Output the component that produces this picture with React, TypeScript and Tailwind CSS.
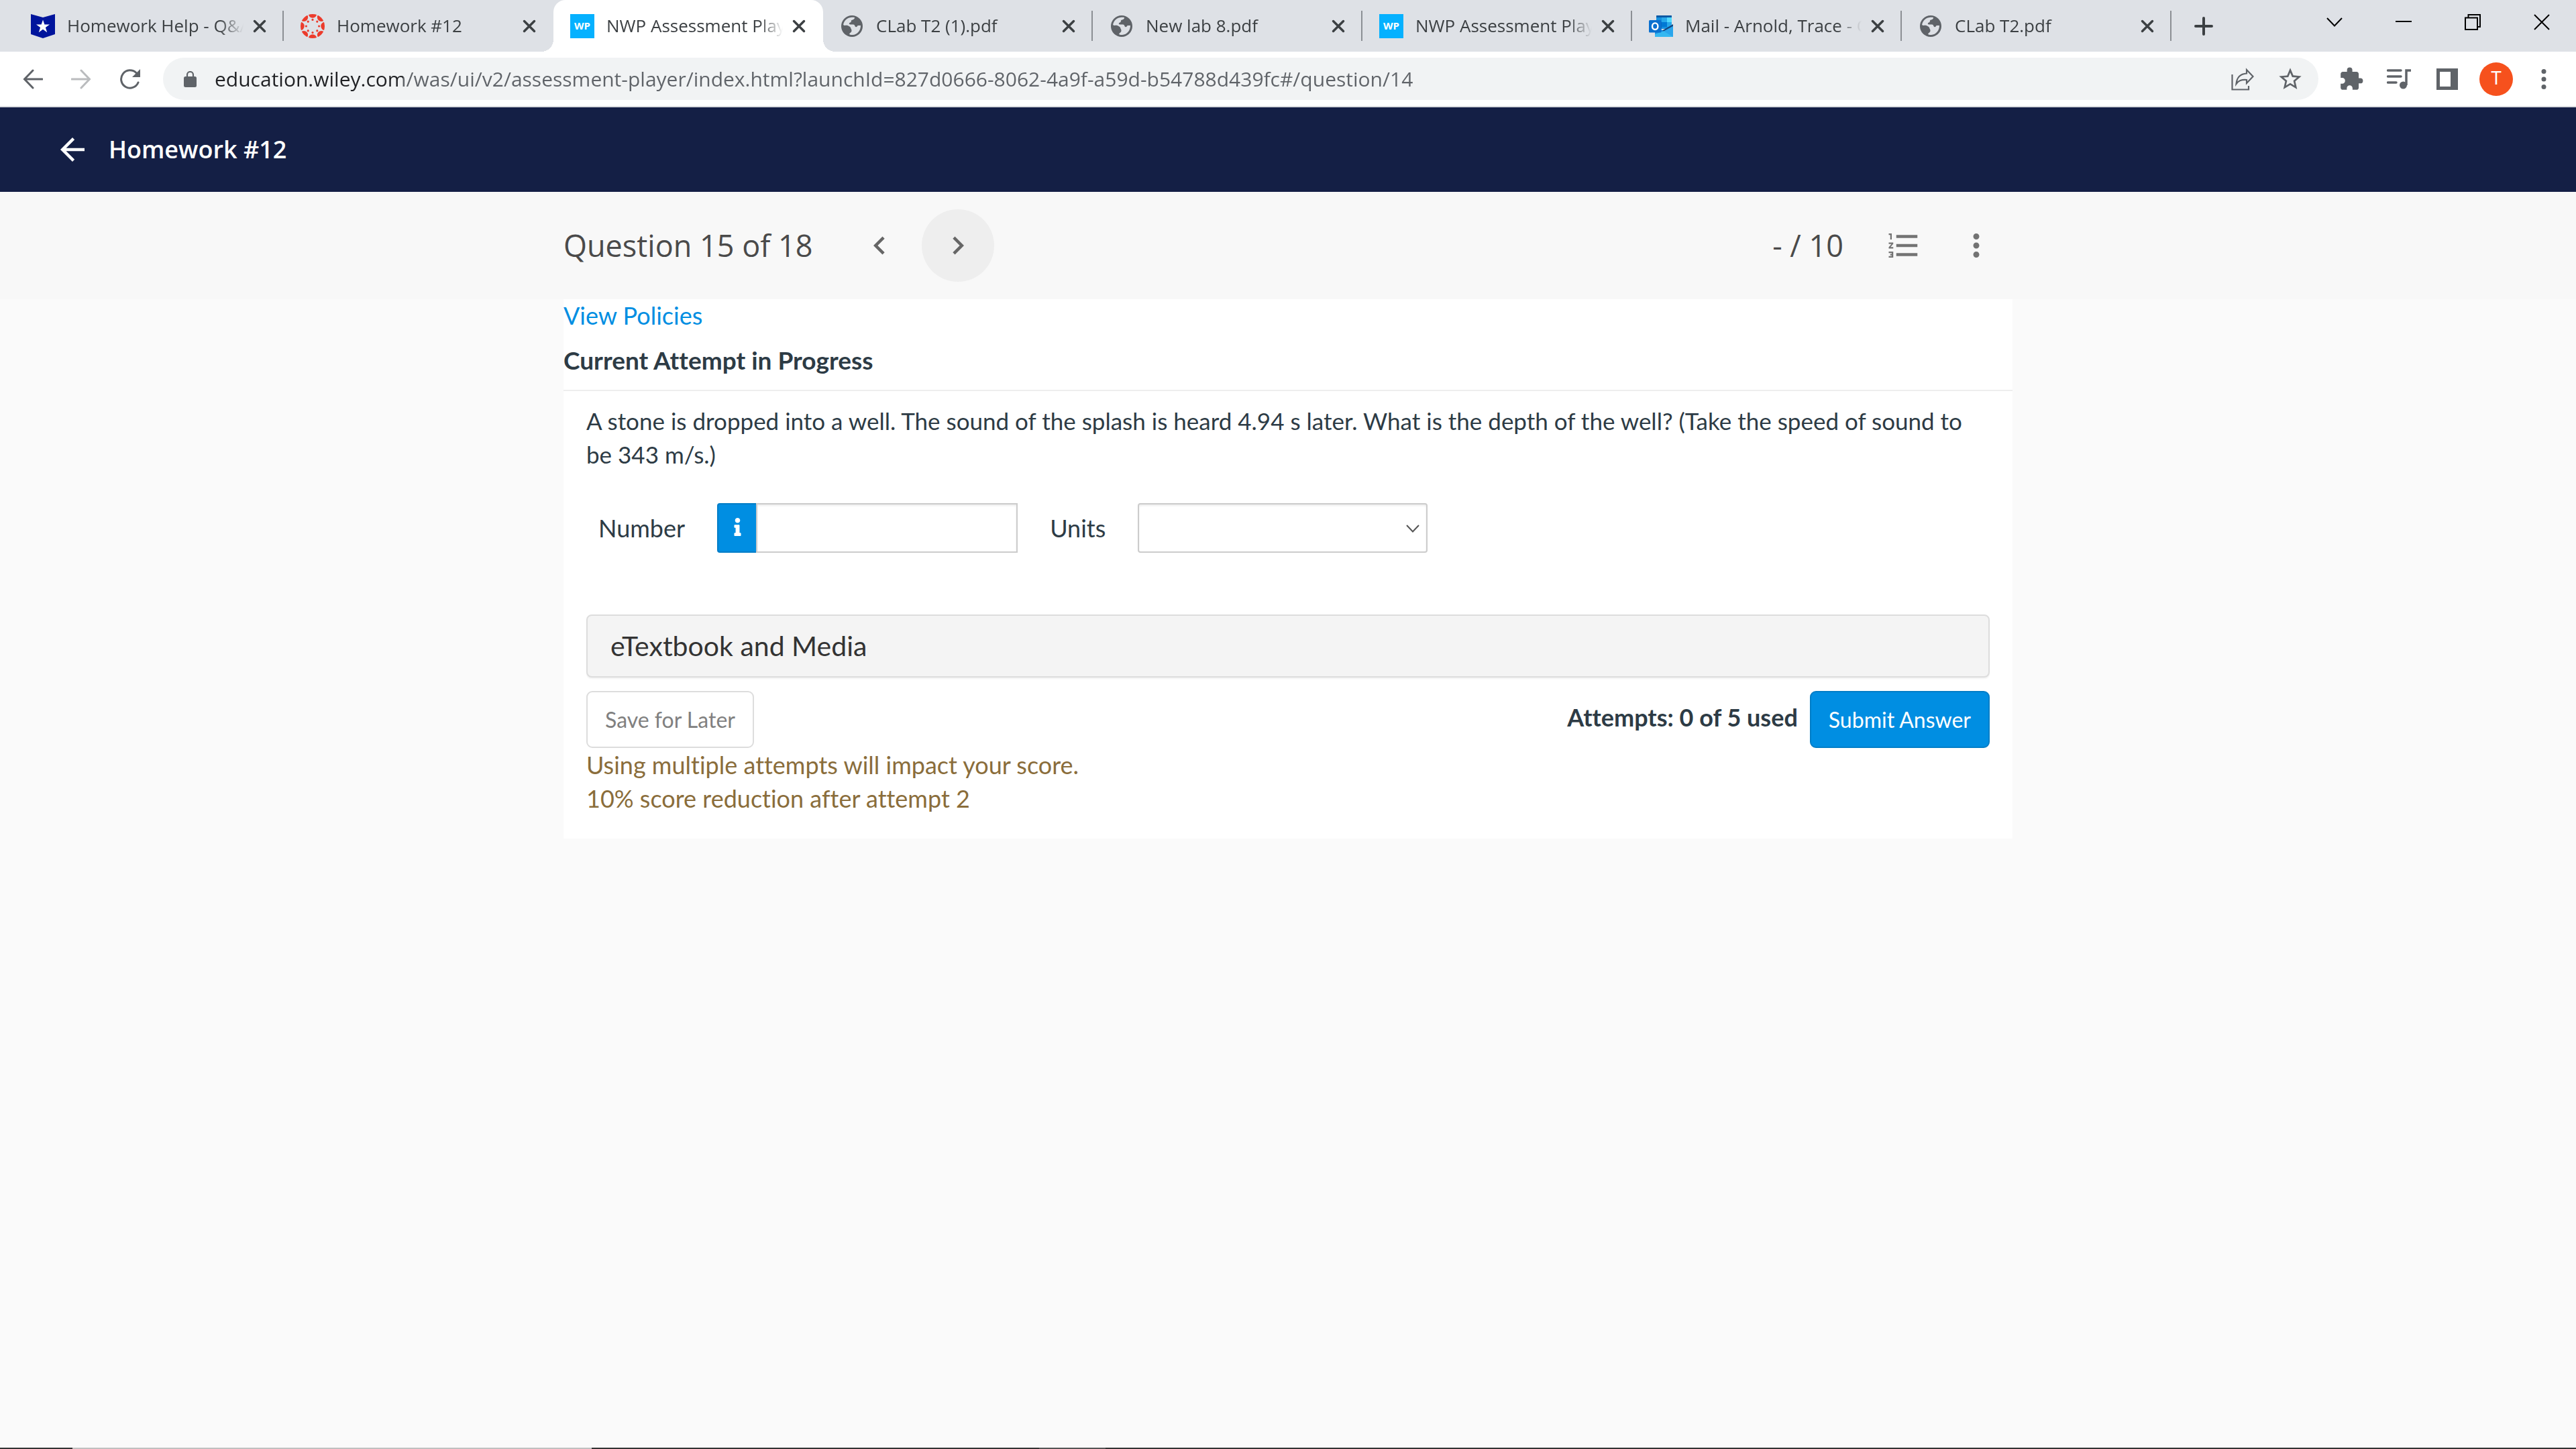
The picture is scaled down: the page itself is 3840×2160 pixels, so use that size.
import React from 'react';
import {
  MdArrowBack,
  MdChevronLeft,
  MdChevronRight,
  MdExtension,
  MdFormatListNumbered,
  MdMoreVert,
  MdStarBorder,
} from 'react-icons/md';
import { FaInfo } from 'react-icons/fa';

type Favicon = 'shield' | 'canvas' | 'wp' | 'globe' | 'outlook';

interface BrowserTab {
  title: string;
  icon: Favicon;
  active?: boolean;
  beforeActive?: boolean;
}

const TABS: BrowserTab[] = [
  { title: 'Homework Help - Q&A', icon: 'shield' },
  { title: 'Homework #12', icon: 'canvas', beforeActive: true },
  { title: 'NWP Assessment Player', icon: 'wp', active: true },
  { title: 'CLab T2 (1).pdf', icon: 'globe' },
  { title: 'New lab 8.pdf', icon: 'globe' },
  { title: 'NWP Assessment Player', icon: 'wp' },
  { title: 'Mail - Arnold, Trace - Outlook', icon: 'outlook' },
  { title: 'CLab T2.pdf', icon: 'globe' },
];

const URL =
  'education.wiley.com/was/ui/v2/assessment-player/index.html?launchId=827d0666-8062-4a9f-a59d-b54788d439fc#/question/14';

function TabIcon({ icon }: { icon: Favicon }) {
  switch (icon) {
    case 'shield':
      return (
        <svg className="size-9 shrink-0" viewBox="0 0 36 36">
          <path d="M0 0L18 5L36 0V30L18 36L0 30Z" fill="#00149c" />
          <path
            d="M18 8.5L20.4 15.6H28L21.9 20L24.2 27.2L18 22.8L11.8 27.2L14.1 20L8 15.6H15.6Z"
            fill="#fff"
          />
        </svg>
      );
    case 'canvas':
      return (
        <svg className="size-9 shrink-0" viewBox="0 0 36 36" fill="#ec3b2c">
          <clipPath id="canvas-disc">
            <circle cx="18" cy="18" r="18" />
          </clipPath>
          {[0, 45, 90, 135, 180, 225, 270, 315].map((angle) => (
            <g key={angle} transform={`rotate(${angle} 18 18)`}>
              <circle cx="18" cy="-0.5" r="6.2" clipPath="url(#canvas-disc)" />
              <circle cx="18" cy="8.4" r="1.6" />
            </g>
          ))}
        </svg>
      );
    case 'wp':
      return (
        <span className="size-9 shrink-0 bg-[#05b1ff] flex items-center justify-center font-['Open_Sans',sans-serif] font-bold text-[15px] leading-none text-white">
          WP
        </span>
      );
    case 'outlook':
      return (
        <svg className="size-9 shrink-0" viewBox="0 0 36 36">
          <path d="M11 3Q11 2 12 2H33Q34 2 34 3V22H11Z" fill="#1490df" />
          <path d="M11 3Q11 2 12 2H33Q34 2 34 3V5H11Z" fill="#0c59a4" />
          <path d="M27 5H34V12H27Z" fill="#50d9ff" />
          <path d="M19 5H27V12H19Z" fill="#28a8ea" />
          <path d="M19 12H27V19H19Z" fill="#0078d4" />
          <path d="M27 12H34V19H27Z" fill="#28a8ea" />
          <path d="M11 12H19V22H11Z" fill="#0364b8" />
          <path d="M36 17L22 25L9 18V30H36Z" fill="#1a8fe0" />
          <path d="M36 15V18L22 26L20 24.500Z" fill="#14447d" />
          <path d="M36 18V34H9V30L22 25.500Z" fill="#2aa5ec" />
          <path d="M9 34H36L22 25.500L9 30Z" fill="#35b8f1" />
          <rect x="0" y="9" width="18.500" height="18.500" rx="1.500" fill="#0a70cf" />
          <ellipse cx="9.200" cy="18.200" rx="4.200" ry="4.800" fill="none" stroke="#fff" strokeWidth="2.400" />
        </svg>
      );
    default:
      return (
        <svg className="size-9 shrink-0" viewBox="0 0 36 36">
          <circle cx="18" cy="18" r="16" fill="#5f6368" />
          <path
            d="M15 5.300C20 4.300 22 5 22 5.300C22 8 19 8.500 17.500 9C16.500 9.500 17.500 12 15.500 12.500C13 13 13.500 15.500 15.500 15.500H20C22.500 15.500 22 19 24 19.300C26 19.500 25.500 17 27.500 17H31C31.200 24 26 30.600 19 31C16.500 31.200 14.500 30.500 14 30C14 28 17.500 27.500 17.500 25C17.500 22.500 16.500 21 14 21H9C7.500 21 6.500 19 5 17.500C5 11.500 9.500 6.500 15 5.300Z"
            fill="#dee1e6"
          />
          <path d="M5 16C7 18 9 16 11.500 17C16 19 18 21 15 25L14 30.500C8 29 4.500 24 5 16Z" fill="#5f6368" />
        </svg>
      );
  }
}

function Tab({ tab }: { tab: BrowserTab }) {
  return (
    <div
      className={`relative flex h-full min-w-0 max-w-[402px] flex-1 items-center pl-[25px] ${
        tab.active ? 'z-10 rounded-t-[18px] bg-white' : ''
      }`}
    >
      {tab.active && (
        <>
          <span className="absolute -left-[18px] bottom-0 size-[18px] bg-[radial-gradient(circle_at_0_0,transparent_18px,white_18px)]" />
          <span className="absolute -right-[18px] bottom-0 size-[18px] bg-[radial-gradient(circle_at_100%_0,transparent_18px,white_18px)]" />
        </>
      )}
      <TabIcon icon={tab.icon} />
      <span className="ml-[18px] min-w-0 flex-1 overflow-hidden whitespace-nowrap pb-[2px] text-[26px] leading-9 text-[#3c4043] [mask-image:linear-gradient(to_left,transparent,black_36px)]">
        {tab.title}
      </span>
      <button aria-label={`Close ${tab.title}`} className="ml-[14px] mr-6 shrink-0">
        <svg className="size-5" viewBox="0 0 20 20" stroke="#3c4043" strokeWidth="3.500" strokeLinecap="round">
          <path d="M2.500 2.500L17.500 17.500M17.500 2.500L2.500 17.500" />
        </svg>
      </button>
      <span
        className={`h-[45px] w-[2px] shrink-0 ${
          tab.active || tab.beforeActive ? 'bg-transparent' : 'bg-[#8b8f94]'
        }`}
      />
    </div>
  );
}

function WindowButton({ label, d }: { label: string; d: string }) {
  return (
    <button aria-label={label} className="flex h-[66px] w-[103px] items-center justify-center">
      <svg className="size-6" viewBox="0 0 24 24" fill="none" stroke="#000" strokeWidth="2">
        <path d={d} />
      </svg>
    </button>
  );
}

function TabStrip() {
  return (
    <div className="flex h-[77px] items-start bg-[#dee1e6] pl-[21px]">
      <div className="flex h-full min-w-0 flex-1">
        {TABS.map((tab, i) => (
          <Tab key={i} tab={tab} />
        ))}
        <button aria-label="New tab" className="ml-[34px] self-center">
          <svg className="size-7" viewBox="0 0 28 28" stroke="#3c4043" strokeWidth="4" strokeLinecap="round">
            <path d="M14 2V26M2 14H26" />
          </svg>
        </button>
      </div>
      <WindowButton label="Search tabs" d="M1 6L12 17.500L23 6" />
      <WindowButton label="Minimize" d="M0 11H24" />
      <WindowButton label="Restore" d="M1 5.500H19V23H1ZM5.500 5.500V1H23V19H19" />
      <WindowButton label="Close" d="M1 1L23 23M23 1L1 23" />
    </div>
  );
}

function Toolbar() {
  return (
    <div className="flex h-[83px] items-center border-b-2 border-[#dadce0] bg-white pl-[34px] pr-6">
      <button aria-label="Back" className="shrink-0">
        <svg className="size-[30px]" viewBox="0 0 30 30" fill="none" stroke="#5f6368" strokeWidth="3" strokeLinecap="round">
          <path d="M29 15H3M15 2L2.500 15L15 28" />
        </svg>
      </button>
      <button aria-label="Forward" className="ml-[42px] shrink-0" disabled>
        <svg className="size-[30px]" viewBox="0 0 30 30" fill="none" stroke="#babcbe" strokeWidth="3" strokeLinecap="round">
          <path d="M1 15H27M15 2L27.500 15L15 28" />
        </svg>
      </button>
      <button aria-label="Reload" className="ml-[42px] shrink-0">
        <svg className="size-8" viewBox="0 0 32 32" fill="none" stroke="#5f6368" strokeWidth="3" strokeLinecap="round">
          <path d="M28 21A13.200 13.200 0 1 1 25 6.500" />
          <path d="M31 1V13H19Z" fill="#5f6368" stroke="none" />
        </svg>
      </button>
      <div className="ml-[33px] flex h-[63px] min-w-0 flex-1 items-center rounded-full bg-[#f1f3f4] pl-[31px] pr-[22px]">
        <svg className="h-6 w-[19px] shrink-0" viewBox="0 0 19 24">
          <rect y="8" width="19" height="16" rx="2.500" fill="#5f6368" />
          <path d="M5 9V5.500A4.500 4.500 0 0 1 14 5.500V9" fill="none" stroke="#5f6368" strokeWidth="2.200" />
        </svg>
        {/* host is dark, the path after it is grey */}
        <input
          aria-label="Address"
          type="text"
          defaultValue={URL}
          className="ml-[27px] h-[50px] min-w-0 flex-1 bg-[linear-gradient(to_right,#202124_281px,#5f6368_281px)] bg-clip-text text-[30px] text-transparent outline-none"
        />
        <button aria-label="Share" className="shrink-0">
          <svg className="size-[34px]" viewBox="0 0 34 34" fill="none" stroke="#5f6368" strokeWidth="2.200">
            <path d="M1.500 10V32.500H26V27" />
            <path d="M23 3L32.500 13L23 23V18C15 17.500 11 19 7.500 24C8.500 14 14 9 23 8.500Z" />
          </svg>
        </button>
        <button aria-label="Bookmark this page" className="ml-[34px] shrink-0 text-[#5f6368]">
          <MdStarBorder className="size-10" />
        </button>
      </div>
      <button aria-label="Extensions" className="ml-[30px] shrink-0 text-[#5f6368]">
        <MdExtension className="size-[38px]" />
      </button>
      <button aria-label="Media controls" className="ml-[34px] shrink-0">
        <svg className="h-[30px] w-9" viewBox="0 0 36 30" fill="none" stroke="#5f6368" strokeWidth="3.500">
          <path d="M1.500 2H21M1.500 11H21M1.500 20H14" strokeLinecap="round" />
          <path d="M36 2H29V24" />
          <circle cx="24.500" cy="24" r="5.500" fill="#5f6368" stroke="none" />
        </svg>
      </button>
      <button aria-label="Side panel" className="ml-[38px] shrink-0">
        <svg className="size-8" viewBox="0 0 32 32">
          <path d="M0 0H32V32H0ZM5 5V27H21V5Z" fill="#5f6368" fillRule="evenodd" />
        </svg>
      </button>
      <button
        aria-label="Profile"
        className="ml-8 flex size-[50px] shrink-0 items-center justify-center rounded-full bg-[#f6511d] font-['Roboto',sans-serif] text-[27px] text-white"
      >
        T
      </button>
      <button aria-label="Menu" className="ml-[22px] shrink-0 text-[#5f6368]">
        <svg className="size-12" viewBox="0 0 48 48" fill="currentColor">
          <circle cx="24" cy="12.500" r="3.500" />
          <circle cx="24" cy="24" r="3.500" />
          <circle cx="24" cy="35.500" r="3.500" />
        </svg>
      </button>
    </div>
  );
}

function QuestionHeader() {
  return (
    <div className="bg-[#f8f8f8]">
      <div className="mx-auto flex h-40 max-w-[2160px] items-center">
        <h2 className="text-[45px] text-[#4a4a4a]">Question 15 of 18</h2>
        <button
          aria-label="Previous question"
          className="ml-[45px] flex size-[108px] items-center justify-center rounded-full text-[#666]"
        >
          <MdChevronLeft className="size-[54px]" />
        </button>
        <button
          aria-label="Next question"
          className="ml-[9px] flex size-[108px] items-center justify-center rounded-full bg-[#eee] text-[#666]"
        >
          <MdChevronRight className="size-[54px]" />
        </button>
        <span className="ml-auto text-[45px] text-[#4a4a4a]">- / 10</span>
        <button
          aria-label="Question list"
          className="ml-9 flex size-[108px] items-center justify-center text-[#737373]"
        >
          <MdFormatListNumbered className="size-[54px]" />
        </button>
        <button aria-label="More options" className="flex size-[108px] items-center justify-center text-[#737373]">
          <MdMoreVert className="size-[54px]" />
        </button>
      </div>
    </div>
  );
}

function AnswerForm() {
  return (
    <div className="mt-12 flex items-center gap-12 pl-[18px]">
      <label htmlFor="number">Number</label>
      <div className="flex h-[74px]">
        <button
          aria-label="Number format help"
          className="flex w-[58px] items-center justify-center rounded-l border-2 border-r-0 border-[#007dc7] bg-[#008ee2] pb-1 text-white"
        >
          <FaInfo className="size-[27px]" />
        </button>
        <input
          id="number"
          type="text"
          className="w-[390px] border-2 border-[#ccc] bg-white px-4 shadow-[inset_0_2px_3px_rgba(0,0,0,0.08)] outline-none"
        />
      </div>
      <label htmlFor="units">Units</label>
      <div className="relative">
        <select
          id="units"
          className="block h-[74px] w-[432px] appearance-none rounded border-2 border-[#ccc] bg-white px-4 shadow-[inset_0_2px_3px_rgba(0,0,0,0.08)]"
        >
          <option value=""></option>
        </select>
        <svg
          className="pointer-events-none absolute right-3 top-8 h-3 w-5"
          viewBox="0 0 20 12"
          fill="none"
          stroke="#555"
          strokeWidth="2"
        >
          <path d="M1 1L10 10.500L19 1" />
        </svg>
      </div>
    </div>
  );
}

function QuestionPanel() {
  return (
    <section className="mx-auto w-full max-w-[2160px] bg-white pb-[35px] font-['Lato',sans-serif] text-[36px] leading-[50px] text-[#2d3b45] [font-variant-ligatures:none]">
      <a href="#policies" className="block w-fit leading-[48px] text-[#008ee2]">
        View Policies
      </a>
      <h3 className="mt-[18px] border-b-2 border-[#eee] pb-[19px] text-[37px] font-bold">
        Current Attempt in Progress
      </h3>
      <div className="px-[34px] pt-[19px]">
        <p className="text-[35px]">
          A stone is dropped into a well. The sound of the splash is heard 4.94 s later. What is the depth of the
          well? (Take the speed of sound to be 343 m/s.)
        </p>
        <AnswerForm />
        <button className="mt-[92px] flex h-[94px] w-full items-center rounded-[8px] border-2 border-[#ddd] bg-[#f4f4f4] px-[34px] text-[41px] text-[#333] shadow-[0_2px_2px_rgba(0,0,0,0.05)]">
          eTextbook and Media
        </button>
        <div className="mt-5 flex items-center">
          <button className="h-[85px] rounded-[9px] border-2 border-[#ddd] bg-white px-[26px] text-[32px] text-[#808080]">
            Save for Later
          </button>
          <span className="ml-auto pb-2 font-bold">Attempts: 0 of 5 used</span>
          <button className="ml-[18px] h-[85px] rounded-[9px] border-2 border-[#007dc7] bg-[#008ee2] px-[26px] text-[32px] text-white">
            Submit Answer
          </button>
        </div>
        <p className="text-[#8a6d3b]">
          Using multiple attempts will impact your score.
          <br />
          10% score reduction after attempt 2
        </p>
      </div>
    </section>
  );
}

export default function App() {
  return (
    <div className="flex min-h-screen flex-col bg-[#fafafa] font-['Open_Sans',sans-serif]">
      <TabStrip />
      <Toolbar />
      <header className="flex h-[126px] items-center bg-[#141f45] pl-[81px] text-white">
        <button aria-label="Back to assignments">
          <MdArrowBack className="size-[54px]" />
        </button>
        <h1 className="ml-[27px] text-[36px] font-semibold">Homework #12</h1>
      </header>
      <main className="flex-1">
        <QuestionHeader />
        <QuestionPanel />
      </main>
      {/* Top edge of the taskbar */}
      <footer className="flex h-[2px] bg-[#333]">
        <span className="ml-[108px] w-[774px] bg-[#c0c0c0]" />
        <span className="ml-[667px] w-[99px] bg-[#555]" />
      </footer>
    </div>
  );
}
